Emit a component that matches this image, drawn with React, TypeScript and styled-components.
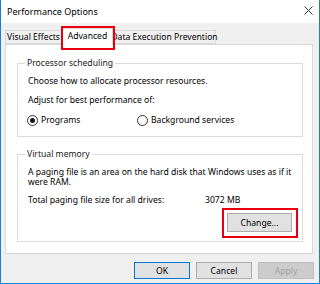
import React from "react";
import styled, { createGlobalStyle } from "styled-components";

const Global = createGlobalStyle`
  html, body { margin: 0; padding: 0; background: #ffffff; }
  * { box-sizing: border-box; }
`;

const FONT = `"Noto Sans", "Open Sans", Arial, sans-serif`;
const SIZE = 8.6;

const Window = styled.div`
  width: 320px;
  height: 284px;
  display: flex;
  flex-direction: column;
  border: 1px solid #1a7fd4;
  border-top: none;
  font-family: ${FONT};
  font-size: ${SIZE}px;
  color: #000;
  background: #f0f0f0;
  white-space: nowrap;
`;

const TitleBar = styled.div`
  height: 23px;
  flex: none;
  background: #ffffff;
  display: flex;
  align-items: center;
  justify-content: space-between;
  padding: 0 6px 0 6px;
`;

const Title = styled.span`
  font-size: 9px;
  line-height: 12px;
  margin-top: 1px;
`;

const Close = styled.svg`
  width: 9px;
  height: 9px;
  margin-top: -2px;
`;

const Body = styled.div`
  flex: 1;
  display: flex;
  flex-direction: column;
  padding: 0 5px 0 4px;
`;

const TabStrip = styled.div`
  height: 21px;
  display: flex;
  align-items: flex-end;
  position: relative;
  z-index: 1;
`;

const TabWrap = styled.div`
  position: relative;
  display: flex;
  align-items: flex-end;
`;

const Tab = styled.div<{ $active?: boolean; $w: number }>`
  width: ${(p) => p.$w}px;
  height: ${(p) => (p.$active ? 17 : 14)}px;
  margin-bottom: ${(p) => (p.$active ? -1 : 0)}px;
  display: flex;
  align-items: center;
  justify-content: center;
  padding-bottom: ${(p) => (p.$active ? 2 : 0)}px;
  line-height: 12px;
  background: ${(p) => (p.$active ? "#ffffff" : "#f0f0f0")};
  border: 1px solid #d9d9d9;
  border-bottom: ${(p) => (p.$active ? "none" : "1px solid #d9d9d9")};
`;

const Highlight = styled.div<{ $t: number; $r: number; $b: number; $l: number }>`
  position: absolute;
  top: ${(p) => p.$t}px;
  right: ${(p) => p.$r}px;
  bottom: ${(p) => p.$b}px;
  left: ${(p) => p.$l}px;
  border: 2px solid #e8000f;
  pointer-events: none;
  z-index: 2;
`;

const Panel = styled.div`
  height: 210px;
  width: 308px;
  background: #ffffff;
  border: 1px solid #d9d9d9;
  display: flex;
  flex-direction: column;
  padding: 12px 9px 0 11px;
`;

const Group = styled.fieldset<{ $mt?: number }>`
  margin: ${(p) => p.$mt ?? 0}px 0 0 0;
  padding: 0 10px 0 10px;
  border: 1px solid #dcdcdc;
  min-width: 0;
`;

const Legend = styled.legend`
  padding: 0 2px;
  margin-left: -3px;
  line-height: 12px;
  color: #1a1a1a;
`;

const Line = styled.div<{ $mt?: number; $lh?: number; $wrap?: boolean }>`
  margin-top: ${(p) => p.$mt ?? 0}px;
  line-height: ${(p) => p.$lh ?? 12}px;
  white-space: ${(p) => (p.$wrap ? "normal" : "nowrap")};
`;

const RadioRow = styled.div`
  margin-top: 8px;
  margin-bottom: 10px;
  display: grid;
  grid-template-columns: 110px auto;
  margin-left: -1px;
`;

const Radio = styled.label`
  display: flex;
  align-items: center;
  gap: 3px;
  line-height: 12px;
`;

const Circle = styled.span<{ $checked?: boolean }>`
  width: 11px;
  height: 11px;
  border-radius: 50%;
  border: 1px solid #333333;
  background: #ffffff;
  display: flex;
  align-items: center;
  justify-content: center;
  &::after {
    content: "";
    display: ${(p) => (p.$checked ? "block" : "none")};
    width: 5px;
    height: 5px;
    border-radius: 50%;
    background: #1a1a1a;
  }
`;

const SizeRow = styled.div`
  margin-top: 7px;
  display: grid;
  grid-template-columns: 177px auto;
  line-height: 12px;
`;

const ButtonRow = styled.div<{ $mt: number; $mb?: number }>`
  display: flex;
  justify-content: flex-end;
  gap: 6px;
  margin-top: ${(p) => p.$mt}px;
  margin-bottom: ${(p) => p.$mb ?? 0}px;
`;

const BtnWrap = styled.div`
  position: relative;
  display: flex;
`;

const Button = styled.button<{ $w: number; $h: number; $variant?: "default" | "disabled" }>`
  width: ${(p) => p.$w}px;
  height: ${(p) => p.$h}px;
  padding: 0;
  font-family: ${FONT};
  font-size: ${SIZE}px;
  line-height: 12px;
  color: ${(p) => (p.$variant === "disabled" ? "#a3a3a3" : "#000")};
  background: ${(p) => (p.$variant === "disabled" ? "#cccccc" : "#e1e1e1")};
  border: 1px solid
    ${(p) =>
      p.$variant === "default" ? "#0078d7" : p.$variant === "disabled" ? "#bfbfbf" : "#adadad"};
  border-radius: 0;
`;

export default function App() {
  return (
    <>
      <Global />
      <Window>
        <TitleBar>
          <Title>Performance Options</Title>
          <Close viewBox="0 0 9 9">
            <path d="M0.5 0.5 L8.5 8.5 M8.5 0.5 L0.5 8.5" stroke="#333" strokeWidth="1" fill="none" />
          </Close>
        </TitleBar>
        <Body>
          <TabStrip>
            <Tab $w={57}>Visual Effects</Tab>
            <TabWrap>
              <Tab $active $w={51}>Advanced</Tab>
              <Highlight $t={-2} $r={-2} $b={-6} $l={-1} />
            </TabWrap>
            <Tab $w={103}>Data Execution Prevention</Tab>
          </TabStrip>
          <Panel>
            <Group>
              <Legend>Processor scheduling</Legend>
              <Line $mt={6}>Choose how to allocate processor resources.</Line>
              <Line $mt={7}>Adjust for best performance of:</Line>
              <RadioRow>
                <Radio>
                  <Circle $checked />
                  Programs
                </Radio>
                <Radio>
                  <Circle />
                  Background services
                </Radio>
              </RadioRow>
            </Group>
            <Group $mt={11}>
              <Legend>Virtual memory</Legend>
              <Line $mt={7} $lh={10} $wrap>
                A paging file is an area on the hard disk that Windows uses as if it were RAM.
              </Line>
              <SizeRow>
                <span>Total paging file size for all drives:</span>
                <span>3072 MB</span>
              </SizeRow>
              <ButtonRow $mt={7} $mb={9}>
                <BtnWrap>
                  <Button $w={65} $h={19}>Change...</Button>
                  <Highlight $t={-5} $r={-6} $b={-6} $l={-5} />
                </BtnWrap>
              </ButtonRow>
            </Group>
          </Panel>
          <ButtonRow $mt={8}>
            <Button $w={56} $h={17} $variant="default">OK</Button>
            <Button $w={56} $h={17}>Cancel</Button>
            <Button $w={56} $h={17} $variant="disabled">Apply</Button>
          </ButtonRow>
        </Body>
      </Window>
    </>
  );
}
